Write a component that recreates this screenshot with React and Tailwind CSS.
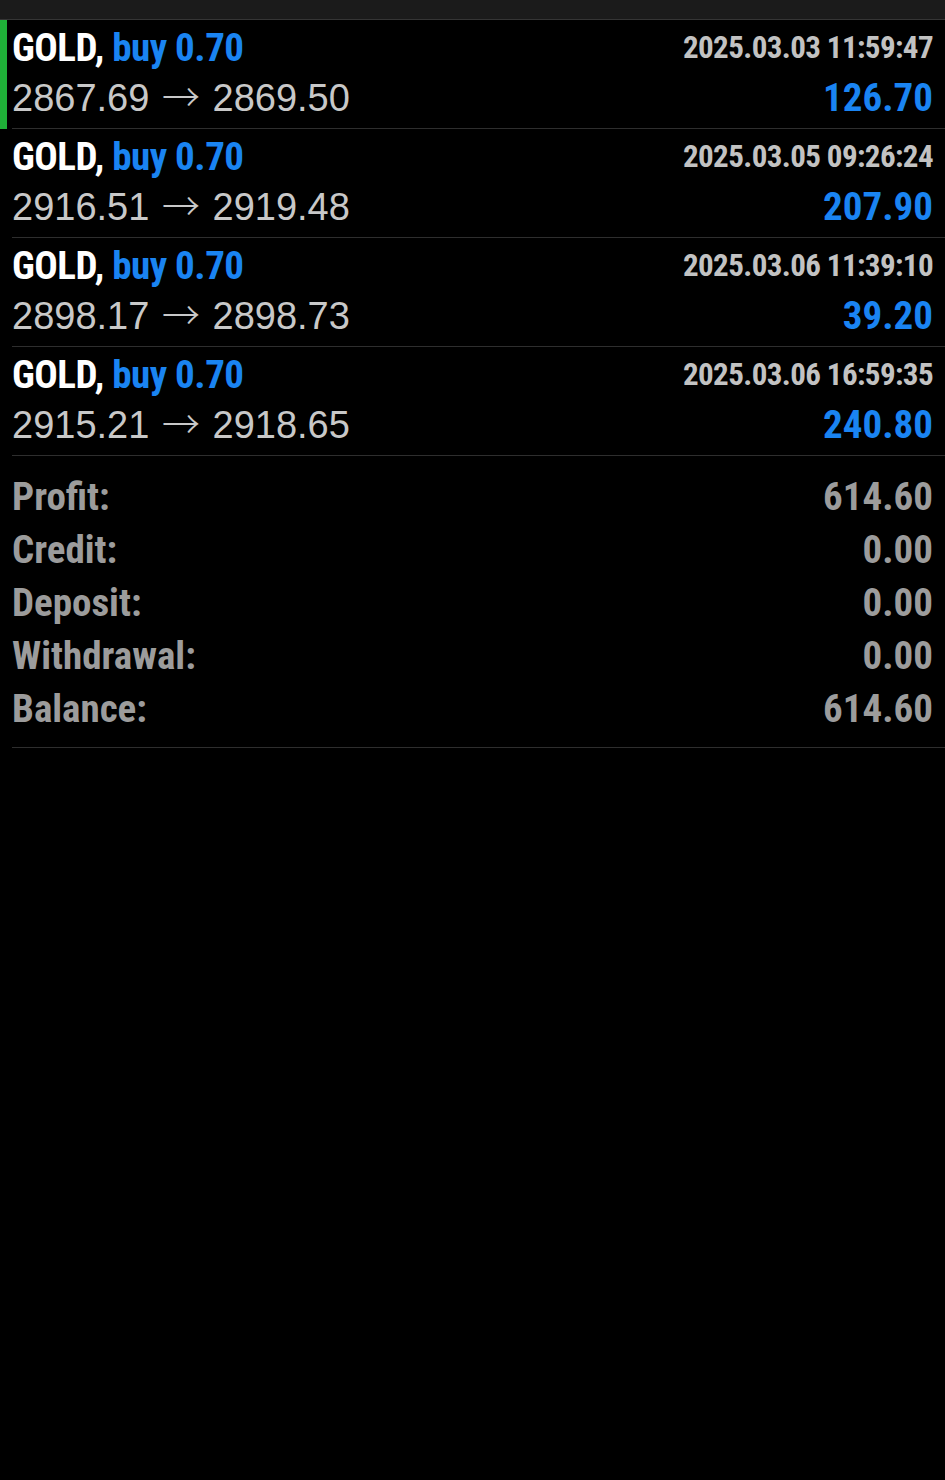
import React from "react";

const trades = [
  { open: "2867.69", close: "2869.50", time: "2025.03.03 11:59:47", profit: "126.70", selected: true },
  { open: "2916.51", close: "2919.48", time: "2025.03.05 09:26:24", profit: "207.90" },
  { open: "2898.17", close: "2898.73", time: "2025.03.06 11:39:10", profit: "39.20" },
  { open: "2915.21", close: "2918.65", time: "2025.03.06 16:59:35", profit: "240.80" },
];

const summary = [
  ["Profit:", "614.60"],
  ["Credit:", "0.00"],
  ["Deposit:", "0.00"],
  ["Withdrawal:", "0.00"],
  ["Balance:", "614.60"],
];

const narrow = "font-['Roboto_Condensed','Liberation_Sans_Narrow',sans-serif] font-bold";
const regular = "font-['Liberation_Sans',Arial,sans-serif]";

export default function App() {
  return (
    <div className="w-[945px] h-[1480px] bg-black overflow-hidden">
      <div className="h-[19px] bg-[#1b1b1b]" />
      <div className="h-px bg-[#353535]" />
      {trades.map((t, i) => (
        <div key={i} className="flex h-[109px]">
          <div className={`w-[7px] ${t.selected ? "bg-[#1fb038]" : "bg-black"}`} />
          <div className="flex-1 ml-[5px] pr-3 pt-[3px] border-b border-[#2e2e2e]">
            <div className="flex justify-between items-start h-[50px]">
              <div className={`${narrow} text-[39px] leading-[50px] tracking-[-0.5px]`}>
                <span className="text-white">GOLD, </span>
                <span className="text-[#1a84f2]">buy 0.70</span>
              </div>
              <div className={`${narrow} text-[31px] leading-[50px] tracking-[-0.6px] text-[#c2c2c2]`}>{t.time}</div>
            </div>
            <div className="flex justify-between items-start h-[50px]">
              <div className={`${regular} text-[38px] leading-[50px] text-[#c8c8c8] whitespace-nowrap`}>
                {t.open}{" "}
                <span className="mx-[2px] leading-none font-['Noto_Sans_CJK_JP',sans-serif] font-light">→</span>{" "}
                {t.close}
              </div>
              <div className={`${narrow} text-[39px] leading-[50px] text-[#1a84f2]`}>{t.profit}</div>
            </div>
          </div>
        </div>
      ))}
      <div className="ml-3 pr-3 pt-[15px] pb-[11px] border-b border-[#2e2e2e]">
        {summary.map(([k, v]) => (
          <div key={k} className={`flex justify-between h-[53px] ${narrow} text-[39px] leading-[53px] text-[#9c9c9c]`}>
            <span>{k}</span>
            <span>{v}</span>
          </div>
        ))}
      </div>
    </div>
  );
}
